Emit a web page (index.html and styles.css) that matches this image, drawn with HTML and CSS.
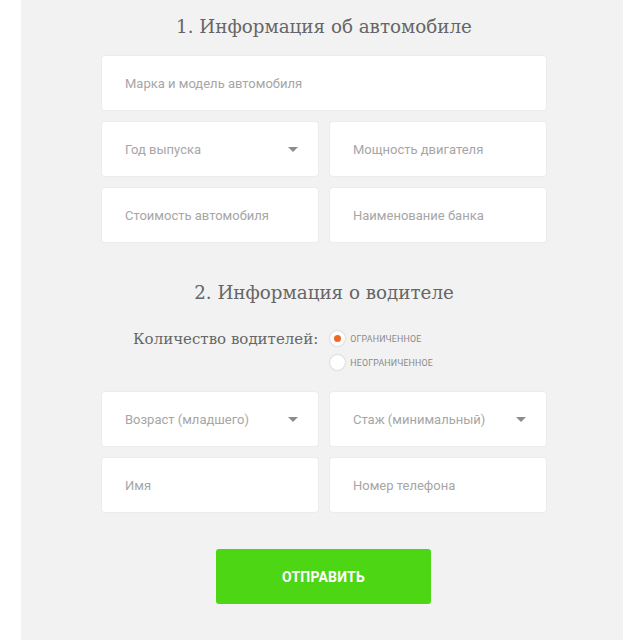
FILE: index.html
```html
<!DOCTYPE html>
<html lang="ru">
<head>
<meta charset="utf-8">
<link rel="stylesheet" href="styles.css">
</head>
<body>
<div class="panel">
  <form class="form">
    <h2 class="title title-1">1. Информация об автомобиле</h2>
    <div class="field wide">Марка и модель автомобиля</div>
    <div class="grid">
      <div class="field select">Год выпуска<span class="arrow"></span></div>
      <div class="field">Мощность двигателя</div>
      <div class="field">Стоимость автомобиля</div>
      <div class="field">Наименование банка</div>
    </div>
    <h2 class="title title-2">2. Информация о водителе</h2>
    <div class="drivers">
      <div class="drivers-label">Количество водителей:</div>
      <div class="radios">
        <label class="radio"><span class="dot checked"></span>ограниченное</label>
        <label class="radio"><span class="dot"></span>неограниченное</label>
      </div>
    </div>
    <div class="grid grid-2">
      <div class="field select">Возраст (младшего)<span class="arrow"></span></div>
      <div class="field select">Стаж (минимальный)<span class="arrow"></span></div>
      <div class="field">Имя</div>
      <div class="field">Номер телефона</div>
    </div>
    <div class="actions">
      <button type="button" class="submit">ОТПРАВИТЬ</button>
    </div>
  </form>
</div>
</body>
</html>
```
FILE: styles.css
```css
html, body {
  margin: 0;
  padding: 0;
  background: #ffffff;
}
.panel {
  margin-left: 21px;
  width: 602px;
  height: 640px;
  background: #f2f2f2;
  overflow: hidden;
}
.form {
  width: 444px;
  margin-left: 81px;
  display: flex;
  flex-direction: column;
}
.title {
  margin: 0;
  font-family: "DejaVu Serif", serif;
  font-weight: normal;
  font-size: 18.3px;
  color: #666;
  text-align: center;
  line-height: 24px;
}
.title-1 {
  margin-top: 15px;
  margin-bottom: 17px;
}
.field {
  box-sizing: border-box;
  height: 54px;
  background: #fff;
  border-radius: 3px;
  padding-left: 23px;
  display: flex;
  align-items: center;
  font-family: "Roboto", "Open Sans", sans-serif;
  font-size: 13px;
  color: #a6a6a6;
  position: relative;
  box-shadow: 0 0 0 1px #ececec;
}
.grid {
  margin-top: 12px;
  display: grid;
  grid-template-columns: 216px 216px;
  column-gap: 12px;
  row-gap: 12px;
}
.select .arrow {
  position: absolute;
  right: 20px;
  top: 25px;
  width: 0;
  height: 0;
  border-left: 5px solid transparent;
  border-right: 5px solid transparent;
  border-top: 5px solid #8c8c8c;
}
.title-2 {
  margin-top: 39px;
}
.drivers {
  margin-top: 26px;
  display: flex;
  align-items: flex-start;
  padding-left: 31px;
}
.drivers-label {
  font-family: "DejaVu Serif", serif;
  font-size: 15px;
  color: #666;
  line-height: 18px;
  margin-top: -1px;
  margin-right: 12px;
}
.radios {
  display: flex;
  flex-direction: column;
  gap: 9px;
}
.radio {
  display: flex;
  align-items: center;
  font-family: "Roboto", "Open Sans", sans-serif;
  font-size: 8.8px;
  text-transform: uppercase;
  color: #8a8a8a;
  height: 15px;
  letter-spacing: 0.2px;
}
.dot {
  box-sizing: border-box;
  width: 15px;
  height: 15px;
  border-radius: 50%;
  background: #fff;
  box-shadow: 0 0 2px rgba(0,0,0,0.25);
  margin-right: 5px;
  display: flex;
  align-items: center;
  justify-content: center;
}
.dot.checked::after {
  content: "";
  width: 7px;
  height: 7px;
  border-radius: 50%;
  background: #f26522;
}
.grid-2 {
  margin-top: 22px;
}
.actions {
  margin-top: 37px;
  display: flex;
  justify-content: center;
}
.submit {
  width: 215px;
  height: 55px;
  margin-left: -1px;
  background: #4dd614;
  border: none;
  border-radius: 3px;
  color: #fff;
  font-family: "Roboto", sans-serif;
  font-weight: bold;
  font-size: 14px;
  letter-spacing: 0.2px;
  cursor: pointer;
}
```
